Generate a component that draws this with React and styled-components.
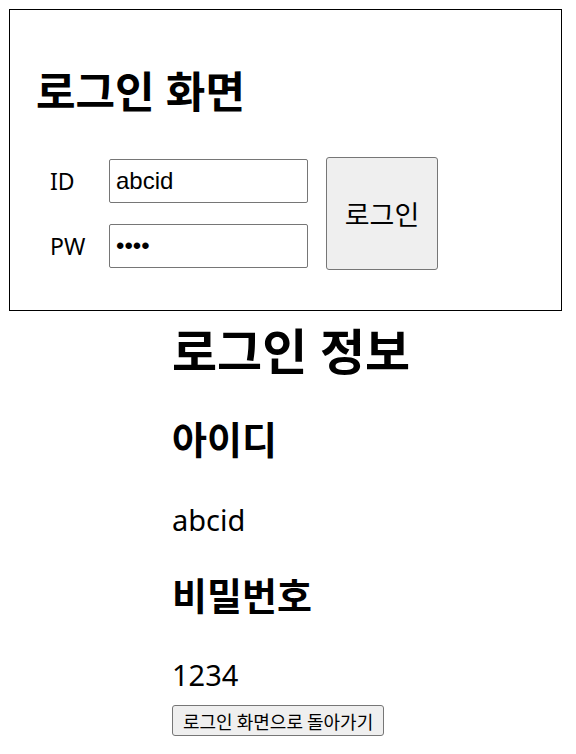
import React from "react";
import styled, { createGlobalStyle } from "styled-components";

const Global = createGlobalStyle`
  html, body { margin: 0; padding: 0; background: #fff; }
  body {
    font-family: "Noto Sans", "Noto Sans CJK KR", sans-serif;
    color: #000;
  }
`;

const Page = styled.div`
  padding: 9px 0 0 9px;
`;

const Panel = styled.section`
  box-sizing: border-box;
  width: 553px;
  border: 1px solid #000;
  padding: 0 0 40px 26px;
`;

const PanelTitle = styled.h1`
  margin: 60px 0 0 0;
  font-size: 43px;
  line-height: 1;
  font-weight: 700;
`;

const LoginRow = styled.div`
  display: flex;
  align-items: center;
  gap: 18px;
  margin: 44px 0 0 14px;
`;

const Fields = styled.div`
  display: grid;
  grid-template-columns: 59px 199px;
  grid-auto-rows: 44px;
  row-gap: 21px;
  align-items: center;
`;

const Label = styled.label`
  font-family: "Noto Sans", sans-serif;
  font-size: 23px;
`;

const Field = styled.input`
  box-sizing: border-box;
  width: 199px;
  height: 44px;
  border: 1px solid #767676;
  border-radius: 2px;
  padding: 0 6px;
  font-family: "Liberation Sans", Arial, sans-serif;
  font-size: 24px;
  color: #000;
  background: #fff;
  outline: none;
`;

const LoginButton = styled.button`
  box-sizing: border-box;
  width: 112px;
  height: 113px;
  background: #efefef;
  border: 1px solid #767676;
  border-radius: 3px;
  font-family: "Noto Sans CJK KR", sans-serif;
  font-size: 27px;
  color: #000;
  padding: 0;
`;

const Info = styled.div`
  margin-left: 172px;
  display: flex;
  flex-direction: column;
  align-items: flex-start;
`;

const InfoTitle = styled.h1`
  margin: 16px 0 0 0;
  font-size: 49px;
  line-height: 1;
  font-weight: 700;
`;

const InfoLabel = styled.h2`
  margin: ${(p) => p.$gap}px 0 0 0;
  font-size: 38px;
  line-height: 1;
  font-weight: 700;
`;

const InfoValue = styled.p`
  margin: ${(p) => p.$gap}px 0 0 0;
  font-size: 29px;
  line-height: 1;
`;

const BackButton = styled.button`
  margin-top: 16px;
  box-sizing: border-box;
  height: 31px;
  padding: 0 10px;
  background: #efefef;
  border: 1px solid #767676;
  border-radius: 3px;
  font-family: "Noto Sans CJK KR", sans-serif;
  font-size: 18px;
  color: #000;
`;

export default function App() {
  return (
    <>
      <Global />
      <Page>
        <Panel>
          <PanelTitle>로그인 화면</PanelTitle>
          <LoginRow>
            <Fields>
              <Label htmlFor="id">ID</Label>
              <Field id="id" type="text" defaultValue="abcid" />
              <Label htmlFor="pw">PW</Label>
              <Field id="pw" type="password" defaultValue="1234" />
            </Fields>
            <LoginButton>로그인</LoginButton>
          </LoginRow>
        </Panel>
      </Page>
      <Info>
        <InfoTitle>로그인 정보</InfoTitle>
        <InfoLabel $gap={44}>아이디</InfoLabel>
        <InfoValue $gap={47}>abcid</InfoValue>
        <InfoLabel $gap={42}>비밀번호</InfoLabel>
        <InfoValue $gap={46}>1234</InfoValue>
        <BackButton>로그인 화면으로 돌아가기</BackButton>
      </Info>
    </>
  );
}
